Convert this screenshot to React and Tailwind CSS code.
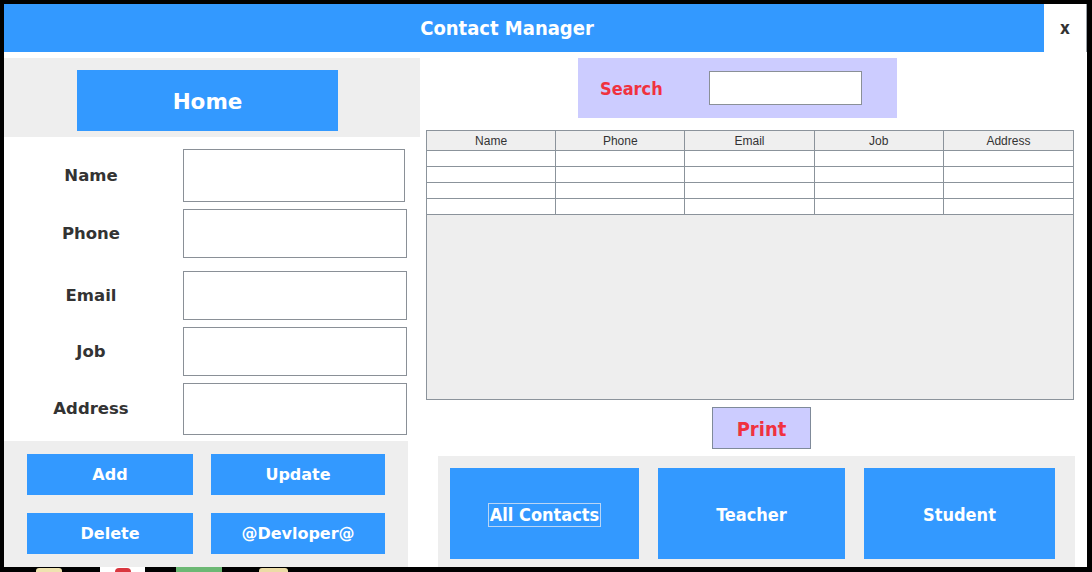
import React from "react";

const COND = { fontFamily: '"DejaVu Sans Condensed", "DejaVu Sans", sans-serif', fontStretch: "condensed" };
const VERD = { fontFamily: '"DejaVu Sans", Verdana, sans-serif' };

function Box({ w, h, className = "" }) {
  return <div className={`bg-white border border-[#8a9097] ${w} ${h} ${className}`} />;
}

function Row({ label, w, h, mt }) {
  return (
    <div className={`flex items-center ${mt}`}>
      <div className="w-[174px] text-center text-[16.5px] font-bold text-[#333333] pt-[1px]" style={VERD}>
        {label}
      </div>
      <Box w={w} h={h} className="ml-[5px]" />
    </div>
  );
}

function BlueBtn({ children, className = "" }) {
  return (
    <div
      className={`bg-[#3399ff] text-white font-bold text-[16px] flex items-center justify-center pt-[1px] ${className}`}
      style={VERD}
    >
      {children}
    </div>
  );
}

const cols = ["Name", "Phone", "Email", "Job", "Address"];

export default function App() {
  return (
    <div className="w-[1092px] h-[572px] bg-black flex flex-col overflow-hidden">
      <div className="ml-[4px] mr-[5px] mt-[4px] h-[563px] bg-white flex flex-col">
        {/* Title bar */}
        <div className="h-[48px] flex shrink-0">
          <div className="flex-1 bg-[#3399ff] flex items-center justify-center pr-[34px]">
            <span className="text-white font-bold text-[20px]" style={COND}>
              Contact Manager
            </span>
          </div>
          <div className="w-[43px] bg-white border-r border-[#9aa0a6] flex items-center justify-center">
            <span className="text-[#333333] font-bold text-[17px] pt-[2px]" style={COND}>
              x
            </span>
          </div>
        </div>
        <div className="h-[6px] shrink-0" />
        {/* Body */}
        <div className="flex h-[509px]">
          {/* Left column */}
          <div className="w-[416px] flex flex-col">
            <div className="h-[79px] bg-[#eeeeee] pl-[73px] pt-[12px]">
              <div
                className="w-[261px] h-[61px] bg-[#3399ff] text-white font-bold text-[21.5px] flex items-center justify-center pt-[3px]"
                style={VERD}
              >
                Home
              </div>
            </div>
            <div className="h-[304px] w-[404px] bg-white pt-[12px]">
              <Row label="Name" w="w-[222px]" h="h-[53px]" mt="" />
              <Row label="Phone" w="w-[224px]" h="h-[49px]" mt="mt-[7px]" />
              <Row label="Email" w="w-[224px]" h="h-[49px]" mt="mt-[13px]" />
              <Row label="Job" w="w-[224px]" h="h-[49px]" mt="mt-[7px]" />
              <Row label="Address" w="w-[224px]" h="h-[52px]" mt="mt-[7px]" />
            </div>
            <div className="h-[126px] w-[404px] bg-[#eeeeee] pt-[13px] pl-[23px]">
              <div className="flex">
                <BlueBtn className="w-[166px] h-[41px]">Add</BlueBtn>
                <BlueBtn className="w-[174px] h-[41px] ml-[18px]">Update</BlueBtn>
              </div>
              <div className="flex mt-[18px]">
                <BlueBtn className="w-[166px] h-[41px]">Delete</BlueBtn>
                <BlueBtn className="w-[174px] h-[41px] ml-[18px]">@Devloper@</BlueBtn>
              </div>
            </div>
          </div>
          {/* Right column */}
          <div className="flex-1 flex flex-col">
            <div className="ml-[158px] w-[319px] h-[60px] bg-[#ccccff] flex items-center">
              <div className="w-[131px] pl-[22px] text-[#f0323f] font-bold text-[18px]" style={COND}>
                Search
              </div>
              <div className="w-[153px] h-[34px] bg-white border border-[#8a9097]" />
            </div>
            <div className="mt-[12px] ml-[6px] w-[648px] h-[270px] border border-[#8b939b] flex flex-col bg-[#eeeeee]">
              <div className="grid grid-cols-5 h-[20px] bg-[#efefef] border-b border-[#8b939b]">
                {cols.map((c, i) => (
                  <div
                    key={c}
                    className={`flex items-center justify-center text-[12px] text-[#333333] pt-[1px] ${
                      i < 4 ? "border-r border-[#8b939b]" : ""
                    }`}
                    style={{ fontFamily: '"Liberation Sans", Arial, sans-serif' }}
                  >
                    {c}
                  </div>
                ))}
              </div>
              {[0, 1, 2, 3].map((r) => (
                <div key={r} className="grid grid-cols-5 h-[16px] bg-white border-b border-[#8b939b]">
                  {cols.map((c, i) => (
                    <div key={c} className={i < 4 ? "border-r border-[#8b939b]" : ""} />
                  ))}
                </div>
              ))}
            </div>
            <div
              className="mt-[7px] ml-[292px] w-[99px] h-[42px] bg-[#ccccff] border border-[#7f8a99] flex items-center justify-center text-[#f0323f] font-bold text-[20px] pt-[1px]"
              style={COND}
            >
              Print
            </div>
            <div className="mt-[7px] ml-[18px] w-[637px] h-[111px] bg-[#eeeeee] flex pt-[12px] pl-[12px]">
              <div className="w-[189px] h-[91px] bg-[#3399ff] flex items-center justify-center pt-[2px]">
                <span className="text-white font-bold text-[18px] border border-[#b9d5f5] leading-[22px] px-[1px]" style={COND}>
                  All Contacts
                </span>
              </div>
              <div className="ml-[19px] w-[187px] h-[91px] bg-[#3399ff] flex items-center justify-center pt-[2px]">
                <span className="text-white font-bold text-[18px]" style={COND}>
                  Teacher
                </span>
              </div>
              <div className="ml-[19px] w-[191px] h-[91px] bg-[#3399ff] flex items-center justify-center pt-[2px]">
                <span className="text-white font-bold text-[18px]" style={COND}>
                  Student
                </span>
              </div>
            </div>
          </div>
        </div>
      </div>
      {/* Taskbar sliver */}
      <div className="h-[5px] flex items-end">
        <div className="ml-[36px] w-[26px] h-[4px] bg-[#efe3b0] rounded-t-[3px]" />
        <div className="ml-[38px] w-[45px] h-[5px] bg-white flex justify-center">
          <div className="mt-[1px] w-[16px] h-[4px] bg-[#d9363e] rounded-t-full" />
        </div>
        <div className="ml-[31px] w-[46px] h-[5px] bg-[#6cb874]" />
        <div className="ml-[37px] w-[29px] h-[4px] bg-[#ecdca6] rounded-t-[3px]" />
      </div>
    </div>
  );
}
